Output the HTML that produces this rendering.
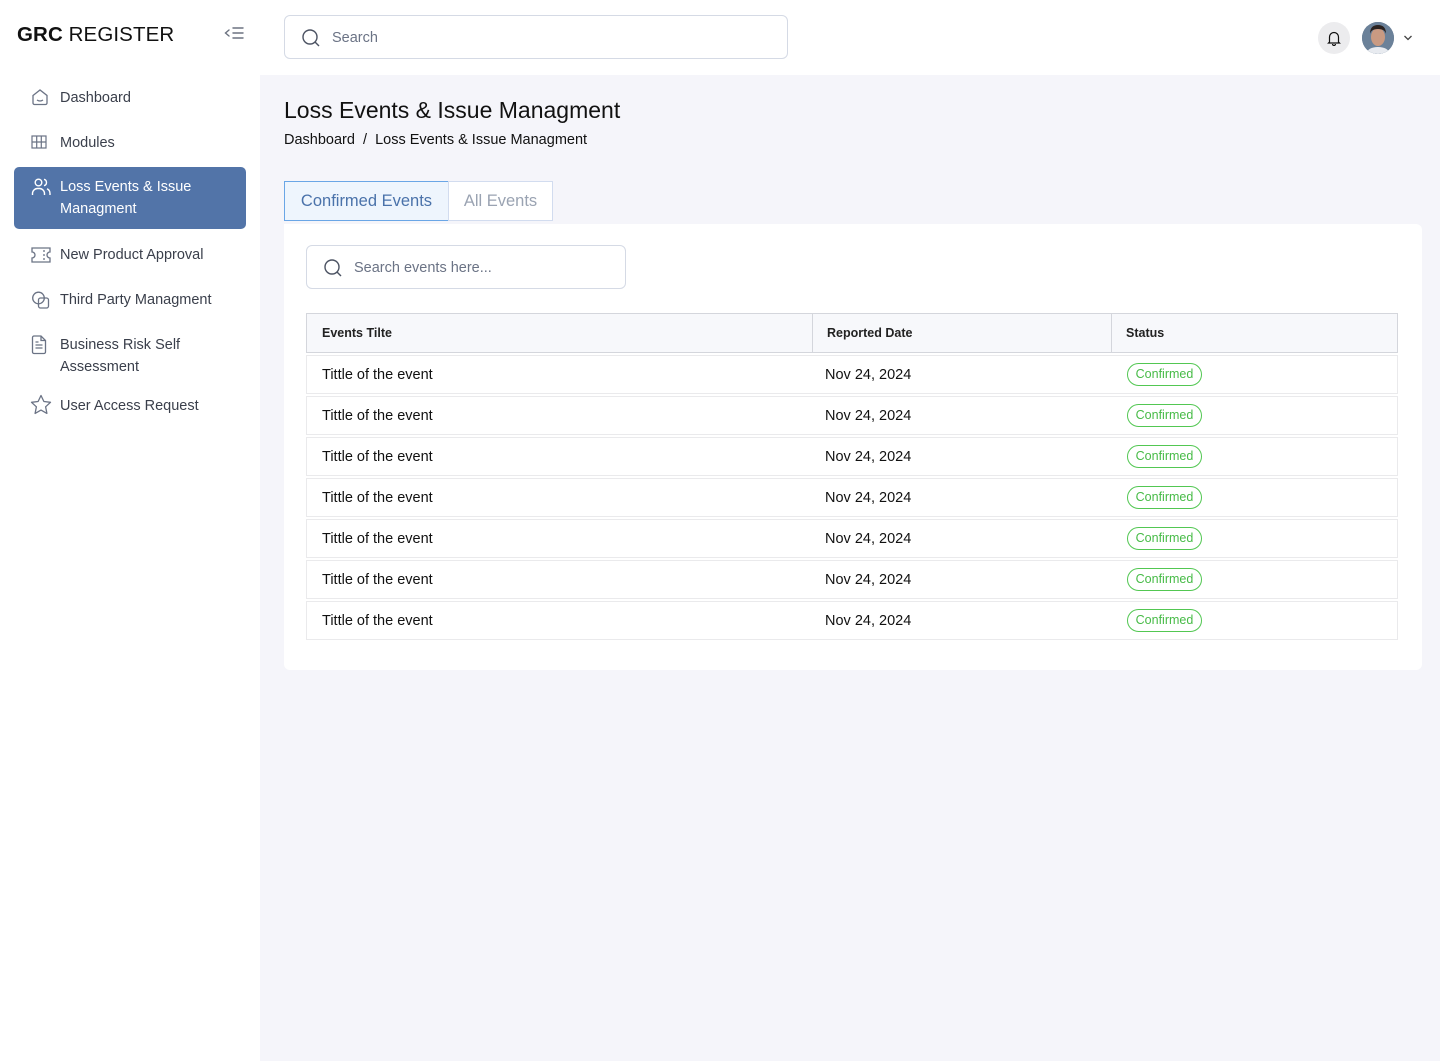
<!DOCTYPE html>
<html><head><meta charset="utf-8"><style>
*{box-sizing:border-box;margin:0;padding:0}
body{width:1440px;height:1061px;font-family:"Liberation Sans",sans-serif;background:#f5f5fa;position:relative;overflow:hidden;color:#111}
.side{position:absolute;left:0;top:0;width:260px;height:1061px;background:#fff}
.logo{position:absolute;left:17px;top:23px;font-size:20.5px;letter-spacing:0.1px;color:#111}
.logo b{font-weight:700}
.collapse{position:absolute;left:224px;top:24px}
.nav{position:absolute;left:14px;width:232px;font-size:14.5px;color:#3a3f4b;line-height:22px}
.nav svg{position:absolute;left:17px}
.nav span{position:absolute;left:46px;top:1px}
.active{background:#5274a8;color:#fff;border-radius:5px;height:62px}
.top{position:absolute;left:260px;top:0;width:1180px;height:75px;background:#fff}
.search{position:absolute;left:284px;top:15px;width:504px;height:44px;border:1px solid #d5dae5;border-radius:6px;background:#fff}
.search span{position:absolute;left:47px;top:14px;color:#6b7385;font-size:14.5px}
.bell{position:absolute;left:1318px;top:22px;width:32px;height:32px;border-radius:50%;background:#ececee}
.av{position:absolute;left:1362px;top:22px;width:32px;height:32px;border-radius:50%;background:#5a6f86;overflow:hidden}
h1{position:absolute;left:284px;top:97px;font-size:23px;font-weight:400;color:#111}
.bc{position:absolute;left:284px;top:132px;font-size:14.5px;color:#111}
.tab1{position:absolute;left:284px;top:181px;width:165px;height:40px;background:#eef5fd;border:1px solid #6aa6e6;color:#4a72aa;font-size:16.5px;text-align:center;line-height:39px}
.tab2{position:absolute;left:448px;top:181px;width:105px;height:40px;background:#fff;border:1px solid #d2dcef;color:#9aa3b2;font-size:16.5px;text-align:center;line-height:39px}
.card{position:absolute;left:284px;top:224px;width:1138px;height:446px;background:#fff;border-radius:0 6px 6px 6px}
.s2{position:absolute;left:306px;top:245px;width:320px;height:44px;border:1px solid #d5dae5;border-radius:6px}
.s2 span{position:absolute;left:47px;top:14px;color:#6b7385;font-size:14.5px}
.th{position:absolute;left:306px;top:313px;width:1092px;height:40px;background:#f7f8fb;border:1px solid #d4d6dc;font-size:12.5px;font-weight:700;color:#222}
.th div{position:absolute;top:12px}
.row{position:absolute;left:306px;width:1092px;height:39px;border:1px solid #eaeaec;font-size:14.5px;color:#111}
.row div{position:absolute;top:11px}
.badge{position:absolute;left:820px;top:7px!important;height:23px;width:75px;border:1.3px solid #52c752;border-radius:12px;color:#47bb47;font-size:12.5px;text-align:center;line-height:20px}
</style></head><body>
<div class="side">
<div class="logo"><b>GRC</b> REGISTER</div>
<svg class="collapse" width="20" height="18" viewBox="0 0 20 18" fill="none" stroke="#6b7280" stroke-width="1.4" stroke-linecap="round"><path d="M5 6L1.5 9L5 12M9 4h10M9 9h10M9 14h10"/></svg>
<div class="nav" style="top:86px;height:22px"><svg width="18" height="18" viewBox="0 0 18 18" fill="none" stroke="#6b7385" stroke-width="1.3" style="top:2px"><path d="M2 7.5L9 2l7 5.5V15a1.5 1.5 0 0 1-1.5 1.5h-11A1.5 1.5 0 0 1 2 15z"/><path d="M6 12q3 2 6 0"/></svg><span>Dashboard</span></div>
<div class="nav" style="top:131px;height:22px"><svg width="16" height="14" viewBox="0 0 16 14" fill="none" stroke="#6b7385" stroke-width="1.2" style="top:4px"><rect x="1" y="1" width="14" height="12"/><path d="M1 7h14M5.7 1v12M10.3 1v12"/></svg><span>Modules</span></div>
<div class="nav active" style="top:167px"><svg width="20" height="20" viewBox="0 0 20 20" fill="none" stroke="#fff" stroke-width="1.4" style="top:10px"><circle cx="7.5" cy="5.5" r="3.3"/><path d="M1.5 18v-1.5a5 5 0 0 1 5-5h2a5 5 0 0 1 5 5V18"/><path d="M13 2.3a3.3 3.3 0 0 1 0 6.4M16 11.8a5 5 0 0 1 3 4.7V18"/></svg><span style="top:9px;color:#fff">Loss Events &amp; Issue<br>Managment</span></div>
<div class="nav" style="top:243px;height:22px"><svg width="20" height="16" viewBox="0 0 20 16" fill="none" stroke="#6b7385" stroke-width="1.3" style="top:4px"><path d="M1 1h18v4a3 3 0 0 0 0 6v4H1v-4a3 3 0 0 0 0-6z"/><path d="M13 3v2M13 7v2M13 11v2"/></svg><span>New Product Approval</span></div>
<div class="nav" style="top:288px;height:22px"><svg width="20" height="20" viewBox="0 0 20 20" fill="none" stroke="#6b7385" stroke-width="1.3" style="top:2px"><circle cx="7.5" cy="8" r="5.8"/><rect x="7.5" y="8" width="10" height="10" rx="2"/></svg><span>Third Party Managment</span></div>
<div class="nav" style="top:333px;height:44px"><svg width="16" height="20" viewBox="0 0 16 20" fill="none" stroke="#6b7385" stroke-width="1.3" style="top:2px"><path d="M1.5 2.5A1.5 1.5 0 0 1 3 1h7l4.5 4.5V17a1.5 1.5 0 0 1-1.5 1.5H3A1.5 1.5 0 0 1 1.5 17z"/><path d="M10 1v4.5h4.5M4.5 10h7M4.5 13h7M4.5 7h3"/></svg><span>Business Risk Self<br>Assessment</span></div>
<div class="nav" style="top:394px;height:22px"><svg width="22" height="22" viewBox="0 0 22 22" fill="none" stroke="#6b7385" stroke-width="1.3" stroke-linejoin="round" style="top:0;left:16px"><path d="M11 1.5l2.9 6 6.6.8-4.9 4.5 1.3 6.6L11 16.1l-5.9 3.3 1.3-6.6L1.5 8.3l6.6-.8z"/></svg><span>User Access Request</span></div>
</div>
<div class="top"></div>
<div class="search"><svg width="20" height="20" viewBox="0 0 20 20" fill="none" stroke="#4b5262" stroke-width="1.4" style="position:absolute;left:16px;top:12px"><circle cx="9" cy="9" r="7"/><path d="M14 14l4 4"/></svg><span>Search</span></div>
<div class="bell"><svg width="16" height="16" viewBox="0 0 16 16" fill="none" stroke="#111" stroke-width="1.2" style="position:absolute;left:8px;top:8px"><path d="M3.5 12V7a4.5 4.5 0 0 1 9 0v5l1 1h-11z"/><path d="M6.5 14a1.5 1.5 0 0 0 3 0"/></svg></div>
<div class="av"><svg width="32" height="32" viewBox="0 0 32 32"><rect width="32" height="32" fill="#6b8199"/><ellipse cx="16" cy="15" rx="7" ry="9" fill="#c99a82"/><path d="M8 12q0-9 8-9t8 9q-1-5-8-5t-8 5z" fill="#2a2220"/><path d="M4 32q2-7 12-7t12 7z" fill="#e8ebf0"/></svg></div>
<svg width="10" height="6" viewBox="0 0 10 6" fill="none" stroke="#444" stroke-width="1.3" style="position:absolute;left:1403px;top:35px"><path d="M1.5 1l3.5 3.5L8.5 1"/></svg>
<h1>Loss Events &amp; Issue Managment</h1>
<div class="bc">Dashboard &nbsp;/&nbsp; Loss Events &amp; Issue Managment</div>
<div class="card"></div>
<div class="tab1">Confirmed Events</div>
<div class="tab2">All Events</div>
<div class="s2"><svg width="20" height="20" viewBox="0 0 20 20" fill="none" stroke="#4b5262" stroke-width="1.4" style="position:absolute;left:16px;top:12px"><circle cx="9" cy="9" r="7"/><path d="M14 14l4 4"/></svg><span>Search events here...</span></div>
<div class="th"><div style="left:15px">Events Tilte</div><div style="left:505px;top:0;height:38px;border-left:1px solid #d4d6dc"></div><div style="left:520px">Reported Date</div><div style="left:804px;top:0;height:38px;border-left:1px solid #d4d6dc"></div><div style="left:819px">Status</div></div>
<div class="row" style="top:355px"><div style="left:15px">Tittle of the event</div><div style="left:518px">Nov 24, 2024</div><div class="badge">Confirmed</div></div>
<div class="row" style="top:396px"><div style="left:15px">Tittle of the event</div><div style="left:518px">Nov 24, 2024</div><div class="badge">Confirmed</div></div>
<div class="row" style="top:437px"><div style="left:15px">Tittle of the event</div><div style="left:518px">Nov 24, 2024</div><div class="badge">Confirmed</div></div>
<div class="row" style="top:478px"><div style="left:15px">Tittle of the event</div><div style="left:518px">Nov 24, 2024</div><div class="badge">Confirmed</div></div>
<div class="row" style="top:519px"><div style="left:15px">Tittle of the event</div><div style="left:518px">Nov 24, 2024</div><div class="badge">Confirmed</div></div>
<div class="row" style="top:560px"><div style="left:15px">Tittle of the event</div><div style="left:518px">Nov 24, 2024</div><div class="badge">Confirmed</div></div>
<div class="row" style="top:601px"><div style="left:15px">Tittle of the event</div><div style="left:518px">Nov 24, 2024</div><div class="badge">Confirmed</div></div>
</body></html>
